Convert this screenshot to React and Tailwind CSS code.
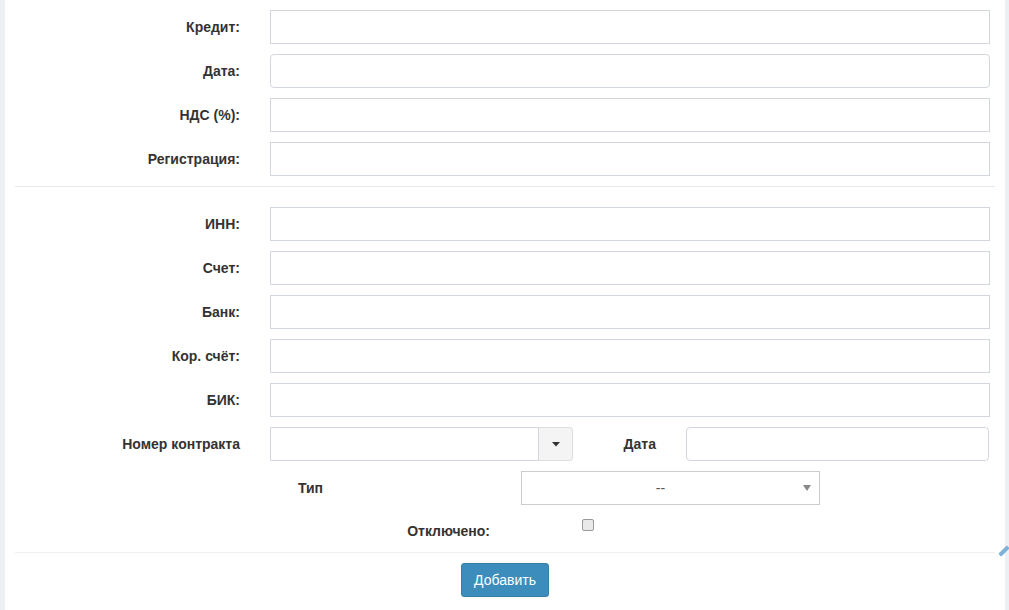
import React from "react";

const font = { fontFamily: '"Liberation Sans", Arial, sans-serif' };

function Row({ label, rounded }) {
  return (
    <div className="flex items-center h-[34px]">
      <label className="w-[250px] pr-[15px] text-right font-bold text-[14px] text-[#333]">{label}</label>
      <div className="w-[750px] px-[15px]">
        <div className={"h-[34px] border border-[#d2d6de] bg-white " + (rounded ? "rounded-[4px]" : "")} />
      </div>
    </div>
  );
}

export default function App() {
  return (
    <div className="flex w-[1009px] h-[610px] overflow-hidden bg-[#ecf0f5] relative" style={font}>
      <div className="w-[5px] shrink-0 bg-[#ecf0f5]" />
      <div className="w-[1000px] shrink-0 bg-white flex flex-col pt-[10px]">
        <div className="flex flex-col gap-[10px]">
          <Row label="Кредит:" />
          <Row label="Дата:" rounded />
          <Row label="НДС (%):" />
          <Row label="Регистрация:" />
        </div>
        <div className="mx-[10px] mt-[10px] mb-[20px] h-px bg-[#e8e8e8]" />
        <div className="flex flex-col gap-[10px]">
          <Row label="ИНН:" />
          <Row label="Счет:" />
          <Row label="Банк:" />
          <Row label="Кор. счёт:" />
          <Row label="БИК:" />
          <div className="flex items-center h-[34px]">
            <label className="w-[250px] pr-[15px] text-right font-bold text-[14px] text-[#333]">Номер контракта</label>
            <div className="w-[333px] px-[15px]">
              <div className="flex h-[34px] w-[303px]">
                <div className="flex-1 border border-[#d2d6de] bg-white" />
                <div className="w-[34px] border border-l-0 border-[#dddddd] bg-[#f4f4f4] rounded-r-[4px] flex items-center justify-center">
                  <svg width="8" height="5" viewBox="0 0 8 5"><path d="M0 0 L8 0 L4 4.5 Z" fill="#333" /></svg>
                </div>
              </div>
            </div>
            <label className="w-[83px] pr-[15px] text-right font-bold text-[14px] text-[#333]">Дата</label>
            <div className="w-[334px] px-[15px]">
              <div className="h-[34px] w-[303px] border border-[#d2d6de] rounded-[4px] bg-white" />
            </div>
          </div>
          <div className="flex items-center h-[34px]">
            <label className="w-[333px] pr-[15px] text-right font-bold text-[14px] text-[#333]">Тип</label>
            <div className="pl-[183px]">
              <div className="relative h-[34px] w-[299px] border border-[#cccccc] bg-white flex items-center justify-center text-[14px] text-[#555]">
                <span className="ml-[-20px]">--</span>
                <svg className="absolute right-[8px] top-[13px]" width="8" height="6" viewBox="0 0 8 6"><path d="M0 0 L8 0 L4 6 Z" fill="#888" /></svg>
              </div>
            </div>
          </div>
        </div>
        <div className="flex h-[23px] mt-[14px]">
          <label className="w-[500px] pr-[15px] pt-[2px] text-right font-bold text-[14px] text-[#333] leading-[20px]">Отключено:</label>
          <div className="pl-[77px]">
            <div className="w-[12px] h-[12px] rounded-[2px] border border-[#9a9a9a] bg-[#e9e9e9]" />
          </div>
        </div>
        <div className="mx-[10px] mt-[10px] h-px bg-[#f0f0f0]" />
        <div className="flex justify-center pt-[10px]">
          <button className="h-[34px] px-[12px] bg-[#3c8dbc] border border-[#367fa9] rounded-[3px] text-white text-[14px]" style={font}>
            Добавить
          </button>
        </div>
      </div>
      <div className="w-[4px] shrink-0 bg-[#ecf0f5]" />
      <div className="absolute left-[1002px] top-[545px] w-[4px] h-[12px] bg-[#7fb2d8] rotate-45 rounded-[1px]" />
    </div>
  );
}
